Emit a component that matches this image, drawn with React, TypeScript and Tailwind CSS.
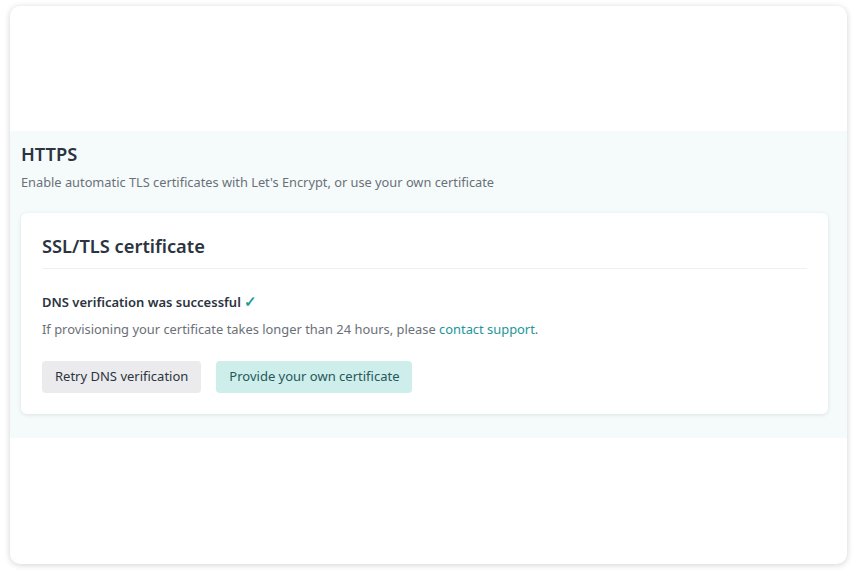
export default function App() {
  return (
    <div
      className="min-h-screen bg-white pl-[10px] pt-[6px] pr-[10px]"
      style={{ fontFamily: '"Noto Sans", "Open Sans", sans-serif' }}
    >
      <div className="flex h-[558px] w-[837px] flex-col overflow-hidden rounded-[10px] bg-white shadow-[0_1px_6px_rgba(0,0,0,0.18)]">
        <div className="h-[125px]" />
        <section className="bg-[#f5fbfb] pb-[24px] pl-[11px] pr-[19px] pt-[10px]">
          <h2 className="text-[18.3px] font-semibold leading-[26px] text-[#2b3440]">HTTPS</h2>
          <p className="mt-[6px] text-[12.8px] leading-[18px] text-[#6b7078]">
            Enable automatic TLS certificates with Let's Encrypt, or use your own certificate
          </p>
          <div className="mt-[22px] rounded-[6px] bg-white px-[21px] pb-[21px] pt-[20px] shadow-[0_1px_4px_rgba(0,0,0,0.1)]">
            <h3 className="border-b border-[#eef0f2] pb-[9px] text-[18.3px] font-semibold leading-[26px] text-[#2b3440]">
              SSL/TLS certificate
            </h3>
            <div className="mt-[24px] h-[18px] text-[13px] font-semibold leading-[18px] text-[#2b3440]">
              DNS verification was successful{" "}
              <span className="text-[15px] font-bold leading-none text-[#1f9c96]">✓</span>
            </div>
            <p className="mt-[9px] text-[12.9px] leading-[18px] text-[#6b7078]">
              If provisioning your certificate takes longer than 24 hours, please{" "}
              <a className="text-[#23969a]" href="#">contact support</a>.
            </p>
            <div className="mt-[23px] flex gap-[15px]">
              <button className="h-[32px] rounded-[4px] bg-[#ebebed] px-[13px] text-[13px] text-[#2b3440]">
                Retry DNS verification
              </button>
              <button className="h-[32px] rounded-[4px] bg-[#cdeeea] px-[13px] text-[13px] text-[#27575a]">
                Provide your own certificate
              </button>
            </div>
          </div>
        </section>
      </div>
    </div>
  );
}
